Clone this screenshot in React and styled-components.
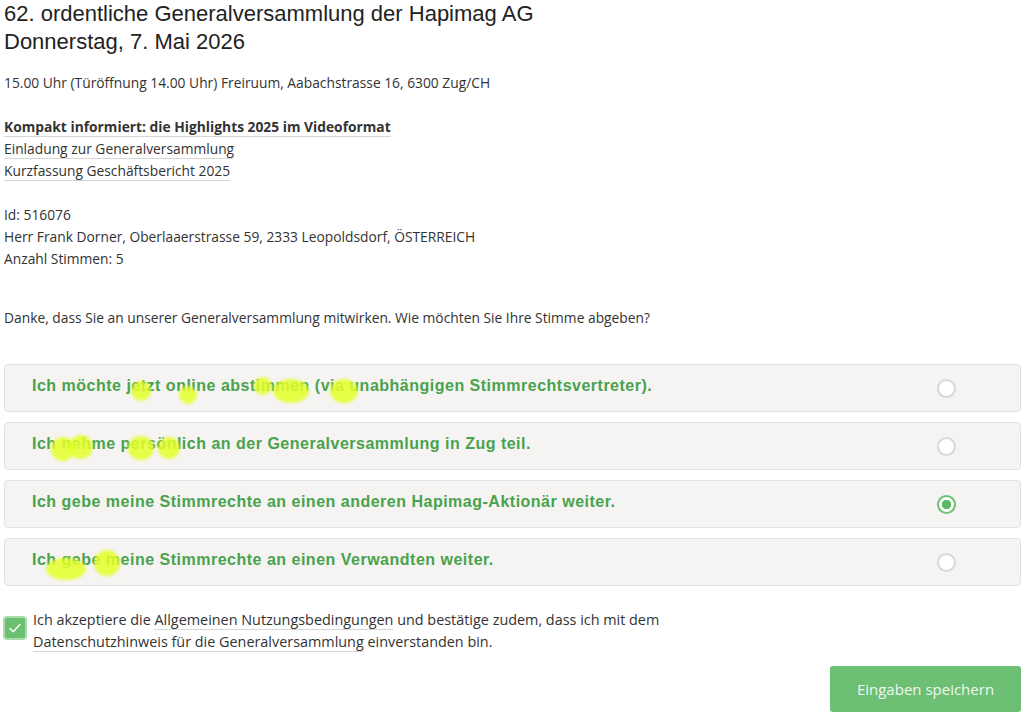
import React, { useState } from "react";
import styled, { createGlobalStyle } from "styled-components";

const GlobalStyle = createGlobalStyle`
  body {
    margin: 0;
    background: #fff;
    font-family: "Open Sans", "Liberation Sans", sans-serif;
    color: #333;
  }
`;

const Page = styled.div`
  padding: 0 3px 0 4px;
`;

const Title = styled.h1`
  margin: 0;
  font-family: "Liberation Sans", Arial, sans-serif;
  font-weight: 400;
  font-size: 22px;
  line-height: 28px;
  color: #222;
`;

const Text = styled.p`
  margin: ${(p) => p.$top || 0}px 0 0;
  font-size: ${(p) => p.$size || 13.8}px;
  line-height: 22px;
`;

const Link = styled.a`
  color: #333;
  text-decoration: none;
  border-bottom: 1px solid #d6d6d6;
  font-weight: ${(p) => (p.$bold ? 700 : 400)};
`;

const Options = styled.div`
  margin-top: 35px;
  display: flex;
  flex-direction: column;
  gap: 10px;
`;

const Card = styled.label`
  position: relative;
  display: flex;
  align-items: center;
  justify-content: space-between;
  height: 48px;
  box-sizing: border-box;
  padding: 0 64px 5px 27px;
  background: #f5f4f3;
  border: 1px solid #e2e2e2;
  border-radius: 4px;
  cursor: pointer;
`;

const CardText = styled.span`
  font-family: "Liberation Sans", Arial, sans-serif;
  font-weight: 700;
  font-size: 16px;
  letter-spacing: 0.5px;
  color: #49a24c;
`;

const Radio = styled.span`
  width: 19px;
  height: 19px;
  margin-top: 5px;
  box-sizing: border-box;
  border-radius: 50%;
  border: 2px solid ${(p) => (p.$on ? "#6cc072" : "#d8d8d8")};
  background: ${(p) => (p.$on ? "radial-gradient(circle, #5cb862 0 4.5px, #fff 5px)" : "#fff")};
`;

const Blob = styled.span`
  position: absolute;
  border-radius: 50%;
  background: rgba(228, 255, 40, 0.85);
  filter: blur(1.5px);
  pointer-events: none;
`;

const Consent = styled.div`
  display: flex;
  align-items: flex-start;
  gap: 6px;
  margin-top: 23px;
`;

const Check = styled.span`
  flex: none;
  width: 24px;
  height: 24px;
  margin: 7px 0 0 -1px;
  box-sizing: border-box;
  border-radius: 4px;
  background: #6cbf71;
  border: 2px solid #aadcab;
  display: flex;
  align-items: center;
  justify-content: center;
`;

const Footer = styled.div`
  display: flex;
  justify-content: flex-end;
  margin-top: 13px;
`;

const Button = styled.button`
  width: 191px;
  height: 46px;
  border: none;
  border-radius: 3px;
  background: #6dbf74;
  color: #eef8ee;
  font-family: "Open Sans", sans-serif;
  font-size: 15px;
`;

const blobsByOption = [
  [
    [126, 16, 20, 20],
    [174, 21, 18, 18],
    [249, 12, 18, 18],
    [268, 14, 36, 24],
    [325, 14, 28, 24],
  ],
  [
    [46, 14, 24, 24],
    [64, 12, 24, 24],
    [123, 13, 26, 24],
    [153, 14, 22, 22],
  ],
  [],
  [
    [41, 19, 40, 22],
    [89, 11, 26, 26],
  ],
];

const options = [
  "Ich möchte jetzt online abstimmen (via unabhängigen Stimmrechtsvertreter).",
  "Ich nehme persönlich an der Generalversammlung in Zug teil.",
  "Ich gebe meine Stimmrechte an einen anderen Hapimag-Aktionär weiter.",
  "Ich gebe meine Stimmrechte an einen Verwandten weiter.",
];

export default function App() {
  const [choice, setChoice] = useState(2);

  return (
    <Page>
      <GlobalStyle />
      <Title>
        62. ordentliche Generalversammlung der Hapimag AG
        <br />
        Donnerstag, 7. Mai 2026
      </Title>
      <Text $top={16}>15.00 Uhr (Türöffnung 14.00 Uhr) Freiruum, Aabachstrasse 16, 6300 Zug/CH</Text>
      <Text $top={22}>
        <Link href="#" $bold>Kompakt informiert: die Highlights 2025 im Videoformat</Link>
        <br />
        <Link href="#">Einladung zur Generalversammlung</Link>
        <br />
        <Link href="#">Kurzfassung Geschäftsbericht 2025</Link>
      </Text>
      <Text $top={22}>
        Id: 516076
        <br />
        Herr Frank Dorner, Oberlaaerstrasse 59, 2333 Leopoldsdorf, ÖSTERREICH
        <br />
        Anzahl Stimmen: 5
      </Text>
      <Text $top={37}>Danke, dass Sie an unserer Generalversammlung mitwirken. Wie möchten Sie Ihre Stimme abgeben?</Text>

      <Options>
        {options.map((label, i) => (
          <Card key={i} onClick={() => setChoice(i)}>
            <CardText>{label}</CardText>
            <Radio $on={choice === i} />
            {blobsByOption[i].map(([x, y, w, h], j) => (
              <Blob key={j} style={{ left: x, top: y, width: w, height: h }} />
            ))}
          </Card>
        ))}
      </Options>

      <Consent>
        <Check>
          <svg width="14" height="14" viewBox="0 0 14 14" fill="none">
            <path d="M2 7.5l3.2 3.2L12 3.5" stroke="#fff" strokeWidth="1.4" strokeLinecap="round" strokeLinejoin="round" />
          </svg>
        </Check>
        <Text $size={14.4}>
          Ich akzeptiere die <Link href="#">Allgemeinen Nutzungsbedingungen</Link> und bestätige zudem, dass ich mit dem
          <br />
          <Link href="#">Datenschutzhinweis für die Generalversammlung</Link> einverstanden bin.
        </Text>
      </Consent>

      <Footer>
        <Button>Eingaben speichern</Button>
      </Footer>
    </Page>
  );
}
